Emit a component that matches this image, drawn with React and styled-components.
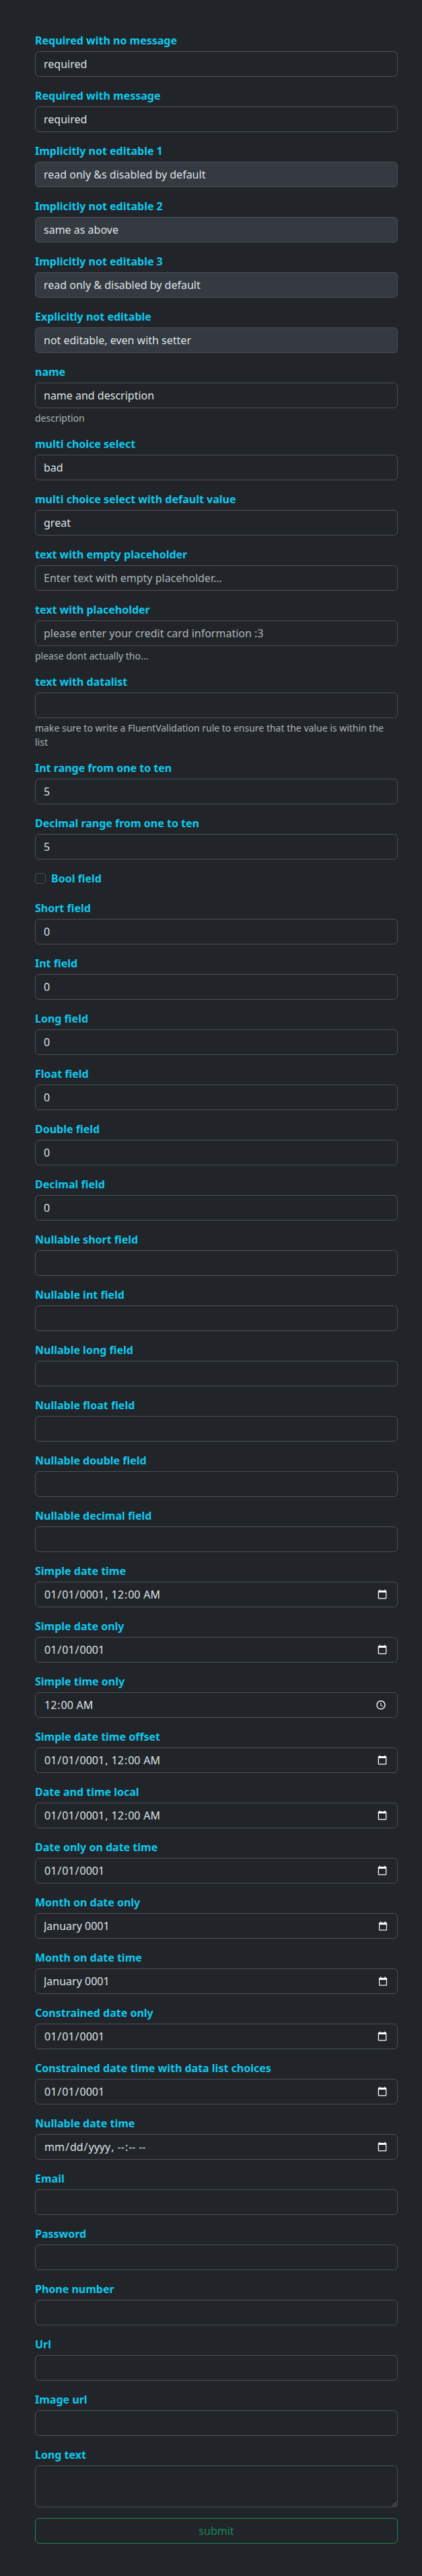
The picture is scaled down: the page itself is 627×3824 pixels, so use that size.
import React from 'react'
import styled, { createGlobalStyle, css } from 'styled-components'

const GlobalStyle = createGlobalStyle`
  html, body {
    margin: 0;
    background: #212529;
  }
  body {
    font-family: 'Noto Sans', 'Liberation Sans', Arial, sans-serif;
    font-size: 16px;
    line-height: 1.5;
    color: #dee2e6;
    color-scheme: dark;
  }
  * {
    box-sizing: border-box;
  }
`

const Page = styled.main`
  padding: 48px 36px 48px 52px;
`

const Form = styled.form`
  display: flex;
  flex-direction: column;
`

const Group = styled.div`
  display: flex;
  flex-direction: column;
  margin-bottom: 16px;
`

const Label = styled.label`
  display: block;
  margin-bottom: 4px;
  font-weight: 700;
  line-height: 24px;
  color: #0dcaf0;
`

const controlCss = css`
  display: block;
  width: 100%;
  height: ${(p) => p.$height || 38}px;
  margin: 0;
  padding: 6px 12px;
  font-family: inherit;
  font-size: 16px;
  line-height: 24px;
  color: #dee2e6;
  background: #212529;
  border: 1px solid #495057;
  border-radius: 6px;
  color-scheme: dark;
  outline: none;
  &:disabled {
    background: #343a40;
    opacity: 1;
    color: #dee2e6;
  }
  &::placeholder {
    color: rgba(222, 226, 230, 0.75);
    opacity: 1;
  }
`

const Input = styled.input`
  ${controlCss}
`

const Select = styled.select`
  ${controlCss}
  appearance: none;
  -webkit-appearance: none;
`

const TextArea = styled.textarea`
  ${controlCss}
  resize: vertical;
`

const PickerWrap = styled.div`
  position: relative;
`

const PickerIcon = styled.svg`
  position: absolute;
  top: 12px;
  right: 15px;
  width: 14px;
  height: 14px;
  pointer-events: none;
`

const HelpText = styled.div`
  margin-top: 4px;
  font-size: 14px;
  line-height: 21px;
  color: rgba(222, 226, 230, 0.75);
`

const CheckRow = styled.div`
  display: flex;
  align-items: flex-start;
  gap: 8px;
  min-height: 24px;
  margin-bottom: 20px;
`

const CheckBox = styled.input`
  appearance: none;
  -webkit-appearance: none;
  flex: none;
  width: 16px;
  height: 16px;
  margin: 4px 0 0;
  background: #212529;
  border: 1px solid #495057;
  border-radius: 4px;
`

const CheckLabel = styled(Label)`
  margin-bottom: 0;
`

const SubmitButton = styled.button`
  display: block;
  width: 100%;
  height: 38px;
  padding: 6px 12px;
  font-family: inherit;
  font-size: 16px;
  line-height: 24px;
  color: #198754;
  background: transparent;
  border: 1px solid #198754;
  border-radius: 6px;
  text-align: center;
`

const before = [
  { label: 'Required with no message', value: 'required' },
  { label: 'Required with message', value: 'required' },
  { label: 'Implicitly not editable 1', value: 'read only &s disabled by default', disabled: true },
  { label: 'Implicitly not editable 2', value: 'same as above', disabled: true },
  { label: 'Implicitly not editable 3', value: 'read only & disabled by default', disabled: true },
  { label: 'Explicitly not editable', value: 'not editable, even with setter', disabled: true },
  { label: 'name', value: 'name and description', help: 'description' },
  { label: 'multi choice select', select: ['bad', 'ok', 'great'], value: 'bad' },
  { label: 'multi choice select with default value', select: ['bad', 'ok', 'great'], value: 'great' },
  { label: 'text with empty placeholder', placeholder: 'Enter text with empty placeholder...' },
  {
    label: 'text with placeholder',
    placeholder: 'please enter your credit card information :3',
    help: 'please dont actually tho...',
  },
  {
    label: 'text with datalist',
    help: 'make sure to write a FluentValidation rule to ensure that the value is within the list',
  },
  { label: 'Int range from one to ten', type: 'number', value: '5' },
  { label: 'Decimal range from one to ten', type: 'number', value: '5' },
]

const after = [
  { label: 'Short field', type: 'number', value: '0' },
  { label: 'Int field', type: 'number', value: '0' },
  { label: 'Long field', type: 'number', value: '0' },
  { label: 'Float field', type: 'number', value: '0' },
  { label: 'Double field', type: 'number', value: '0' },
  { label: 'Decimal field', type: 'number', value: '0' },
  { label: 'Nullable short field', type: 'number' },
  { label: 'Nullable int field', type: 'number' },
  { label: 'Nullable long field', type: 'number' },
  { label: 'Nullable float field', type: 'number' },
  { label: 'Nullable double field', type: 'number' },
  { label: 'Nullable decimal field', type: 'number' },
  { label: 'Simple date time', type: 'datetime-local', value: '0001-01-01T00:00' },
  { label: 'Simple date only', type: 'date', value: '0001-01-01' },
  { label: 'Simple time only', type: 'time', value: '00:00' },
  { label: 'Simple date time offset', type: 'datetime-local', value: '0001-01-01T00:00' },
  { label: 'Date and time local', type: 'datetime-local', value: '0001-01-01T00:00' },
  { label: 'Date only on date time', type: 'date', value: '0001-01-01' },
  { label: 'Month on date only', month: true, value: 'January 0001' },
  { label: 'Month on date time', month: true, value: 'January 0001' },
  { label: 'Constrained date only', type: 'date', value: '0001-01-01' },
  { label: 'Constrained date time with data list choices', type: 'date', value: '0001-01-01' },
  { label: 'Nullable date time', type: 'datetime-local' },
  { label: 'Email', type: 'email' },
  { label: 'Password', type: 'password' },
  { label: 'Phone number', type: 'tel' },
  { label: 'Url', type: 'url' },
  { label: 'Image url', type: 'url' },
]

const CalendarIcon = () => (
  <PickerIcon viewBox="0 0 14 14" fill="none">
    <rect x="3" y="0.5" width="1.6" height="3" fill="#f8f9fa" />
    <rect x="9.4" y="0.5" width="1.6" height="3" fill="#f8f9fa" />
    <rect x="1" y="2" width="12" height="3.2" fill="#f8f9fa" />
    <rect x="1.6" y="2.6" width="10.8" height="10.8" stroke="#f8f9fa" strokeWidth="1.2" />
    <rect x="1" y="12.4" width="12" height="1.4" fill="#adb5bd" />
  </PickerIcon>
)

const Field = ({ field, id }) => {
  let control
  if (field.select) {
    control = (
      <Select id={id} defaultValue={field.value}>
        {field.select.map((o) => (
          <option key={o} value={o}>
            {o}
          </option>
        ))}
      </Select>
    )
  } else if (field.month) {
    control = (
      <PickerWrap>
        <Input id={id} type="text" defaultValue={field.value} />
        <CalendarIcon />
      </PickerWrap>
    )
  } else {
    control = (
      <Input
        id={id}
        type={field.type || 'text'}
        defaultValue={field.value}
        placeholder={field.placeholder}
        disabled={field.disabled}
      />
    )
  }
  return (
    <Group>
      <Label htmlFor={id}>{field.label}</Label>
      {control}
      {field.help && <HelpText>{field.help}</HelpText>}
    </Group>
  )
}

export default function App() {
  return (
    <>
      <GlobalStyle />
      <Page>
        <Form onSubmit={(e) => e.preventDefault()}>
          {before.map((f, i) => (
            <Field key={f.label} field={f} id={`a${i}`} />
          ))}
          <CheckRow>
            <CheckBox type="checkbox" id="bool" />
            <CheckLabel htmlFor="bool">Bool field</CheckLabel>
          </CheckRow>
          {after.map((f, i) => (
            <Field key={f.label} field={f} id={`b${i}`} />
          ))}
          <Group>
            <Label htmlFor="long">Long text</Label>
            <TextArea id="long" rows={2} $height={62} />
          </Group>
          <SubmitButton type="submit">submit</SubmitButton>
        </Form>
      </Page>
    </>
  )
}
